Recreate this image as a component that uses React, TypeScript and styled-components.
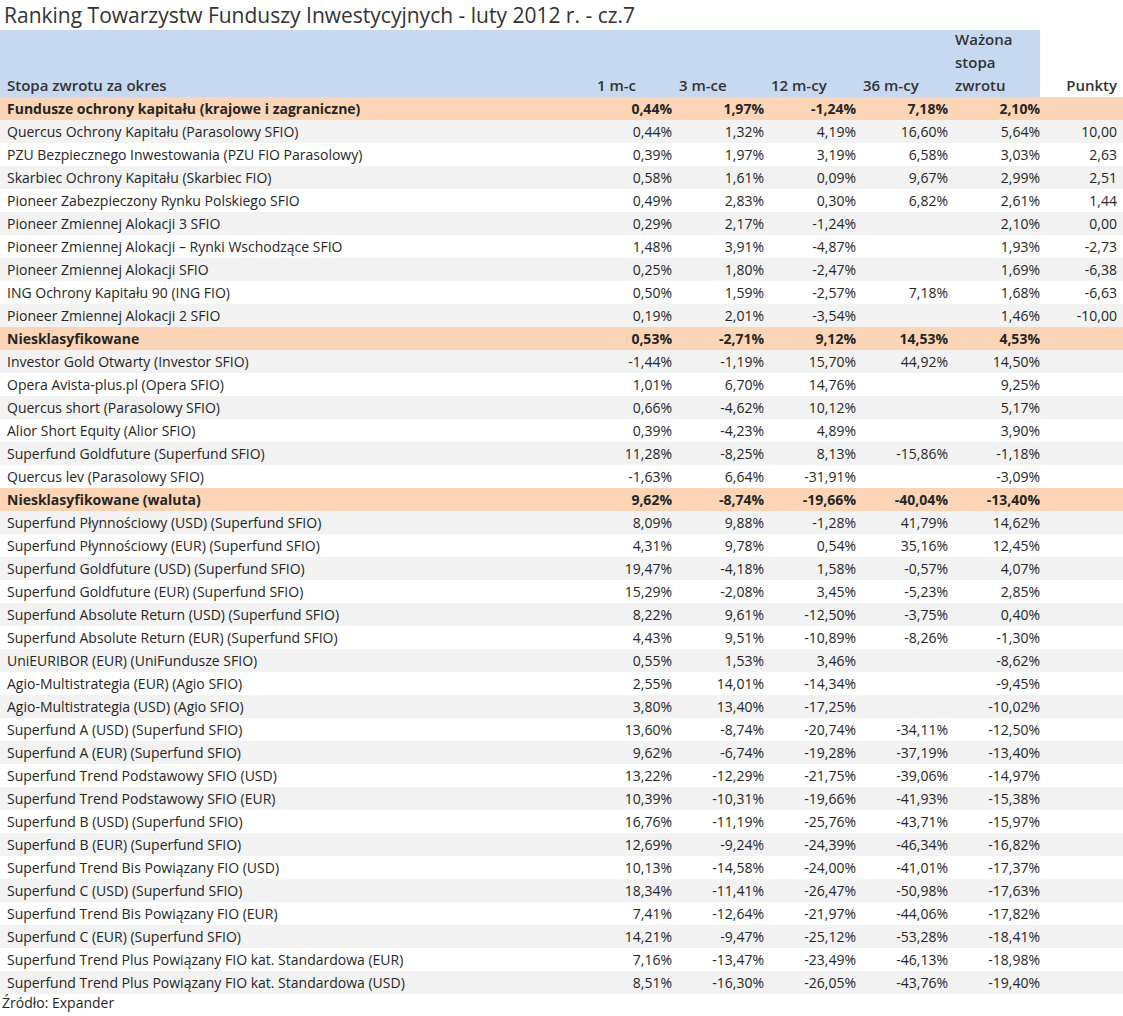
import styled, { createGlobalStyle } from "styled-components";

const Global = createGlobalStyle`
  body {
    margin: 0;
    background: #ffffff;
    font-family: "Open Sans", "Liberation Sans", sans-serif;
    color: #262626;
  }
`;

const Page = styled.div`
  width: 1123px;
  display: flex;
  flex-direction: column;
`;

const Title = styled.div`
  height: 30px;
  padding-left: 4px;
  font-size: 21px;
  line-height: 30px;
  color: #333;
`;

const Table = styled.div`
  display: grid;
  grid-template-columns: 590px 82px 92px 92px 92px 92px 77px 6px;
`;

const HeadCell = styled.div<{ $right?: boolean; $white?: boolean }>`
  height: 67px;
  background: ${({ $white }) => ($white ? "#ffffff" : "#c6d9f0")};
  font-size: 15px;
  font-weight: 600;
  line-height: 23px;
  color: #333;
  display: flex;
  align-items: flex-end;
  justify-content: ${({ $right }) => ($right ? "flex-end" : "flex-start")};
  padding: 0 ${({ $right }) => ($right ? "0" : "7px")} 0 7px;
`;

const Cell = styled.div<{ $bg: string; $bold?: boolean; $right?: boolean }>`
  height: 23px;
  background: ${({ $bg }) => $bg};
  font-size: 14px;
  font-weight: ${({ $bold }) => ($bold ? 700 : 400)};
  line-height: 23px;
  white-space: nowrap;
  text-align: ${({ $right }) => ($right ? "right" : "left")};
  padding-left: ${({ $right }) => ($right ? "0" : "7px")};
`;

const Source = styled.div`
  font-size: 14px;
  padding-left: 2px;
  line-height: 18px;
`;

const data: { g?: boolean; r: string[] }[] = [
  { g: true, r: ["Fundusze ochrony kapitału (krajowe i zagraniczne)", "0,44%", "1,97%", "-1,24%", "7,18%", "2,10%", ""] },
  { r: ["Quercus Ochrony Kapitału (Parasolowy SFIO)", "0,44%", "1,32%", "4,19%", "16,60%", "5,64%", "10,00"] },
  { r: ["PZU Bezpiecznego Inwestowania (PZU FIO Parasolowy)", "0,39%", "1,97%", "3,19%", "6,58%", "3,03%", "2,63"] },
  { r: ["Skarbiec Ochrony Kapitału (Skarbiec FIO)", "0,58%", "1,61%", "0,09%", "9,67%", "2,99%", "2,51"] },
  { r: ["Pioneer Zabezpieczony Rynku Polskiego SFIO", "0,49%", "2,83%", "0,30%", "6,82%", "2,61%", "1,44"] },
  { r: ["Pioneer Zmiennej Alokacji 3 SFIO", "0,29%", "2,17%", "-1,24%", "", "2,10%", "0,00"] },
  { r: ["Pioneer Zmiennej Alokacji – Rynki Wschodzące SFIO", "1,48%", "3,91%", "-4,87%", "", "1,93%", "-2,73"] },
  { r: ["Pioneer Zmiennej Alokacji SFIO", "0,25%", "1,80%", "-2,47%", "", "1,69%", "-6,38"] },
  { r: ["ING Ochrony Kapitału 90 (ING FIO)", "0,50%", "1,59%", "-2,57%", "7,18%", "1,68%", "-6,63"] },
  { r: ["Pioneer Zmiennej Alokacji 2 SFIO", "0,19%", "2,01%", "-3,54%", "", "1,46%", "-10,00"] },
  { g: true, r: ["Niesklasyfikowane", "0,53%", "-2,71%", "9,12%", "14,53%", "4,53%", ""] },
  { r: ["Investor Gold Otwarty (Investor SFIO)", "-1,44%", "-1,19%", "15,70%", "44,92%", "14,50%", ""] },
  { r: ["Opera Avista-plus.pl (Opera SFIO)", "1,01%", "6,70%", "14,76%", "", "9,25%", ""] },
  { r: ["Quercus short (Parasolowy SFIO)", "0,66%", "-4,62%", "10,12%", "", "5,17%", ""] },
  { r: ["Alior Short Equity (Alior SFIO)", "0,39%", "-4,23%", "4,89%", "", "3,90%", ""] },
  { r: ["Superfund Goldfuture (Superfund SFIO)", "11,28%", "-8,25%", "8,13%", "-15,86%", "-1,18%", ""] },
  { r: ["Quercus lev (Parasolowy SFIO)", "-1,63%", "6,64%", "-31,91%", "", "-3,09%", ""] },
  { g: true, r: ["Niesklasyfikowane (waluta)", "9,62%", "-8,74%", "-19,66%", "-40,04%", "-13,40%", ""] },
  { r: ["Superfund Płynnościowy (USD) (Superfund SFIO)", "8,09%", "9,88%", "-1,28%", "41,79%", "14,62%", ""] },
  { r: ["Superfund Płynnościowy (EUR) (Superfund SFIO)", "4,31%", "9,78%", "0,54%", "35,16%", "12,45%", ""] },
  { r: ["Superfund Goldfuture (USD) (Superfund SFIO)", "19,47%", "-4,18%", "1,58%", "-0,57%", "4,07%", ""] },
  { r: ["Superfund Goldfuture (EUR) (Superfund SFIO)", "15,29%", "-2,08%", "3,45%", "-5,23%", "2,85%", ""] },
  { r: ["Superfund Absolute Return (USD) (Superfund SFIO)", "8,22%", "9,61%", "-12,50%", "-3,75%", "0,40%", ""] },
  { r: ["Superfund Absolute Return (EUR) (Superfund SFIO)", "4,43%", "9,51%", "-10,89%", "-8,26%", "-1,30%", ""] },
  { r: ["UniEURIBOR (EUR) (UniFundusze SFIO)", "0,55%", "1,53%", "3,46%", "", "-8,62%", ""] },
  { r: ["Agio-Multistrategia (EUR) (Agio SFIO)", "2,55%", "14,01%", "-14,34%", "", "-9,45%", ""] },
  { r: ["Agio-Multistrategia (USD) (Agio SFIO)", "3,80%", "13,40%", "-17,25%", "", "-10,02%", ""] },
  { r: ["Superfund A (USD) (Superfund SFIO)", "13,60%", "-8,74%", "-20,74%", "-34,11%", "-12,50%", ""] },
  { r: ["Superfund A (EUR) (Superfund SFIO)", "9,62%", "-6,74%", "-19,28%", "-37,19%", "-13,40%", ""] },
  { r: ["Superfund Trend Podstawowy SFIO (USD)", "13,22%", "-12,29%", "-21,75%", "-39,06%", "-14,97%", ""] },
  { r: ["Superfund Trend Podstawowy SFIO (EUR)", "10,39%", "-10,31%", "-19,66%", "-41,93%", "-15,38%", ""] },
  { r: ["Superfund B (USD) (Superfund SFIO)", "16,76%", "-11,19%", "-25,76%", "-43,71%", "-15,97%", ""] },
  { r: ["Superfund B (EUR) (Superfund SFIO)", "12,69%", "-9,24%", "-24,39%", "-46,34%", "-16,82%", ""] },
  { r: ["Superfund Trend Bis Powiązany FIO (USD)", "10,13%", "-14,58%", "-24,00%", "-41,01%", "-17,37%", ""] },
  { r: ["Superfund C (USD) (Superfund SFIO)", "18,34%", "-11,41%", "-26,47%", "-50,98%", "-17,63%", ""] },
  { r: ["Superfund Trend Bis Powiązany FIO (EUR)", "7,41%", "-12,64%", "-21,97%", "-44,06%", "-17,82%", ""] },
  { r: ["Superfund C (EUR) (Superfund SFIO)", "14,21%", "-9,47%", "-25,12%", "-53,28%", "-18,41%", ""] },
  { r: ["Superfund Trend Plus Powiązany FIO kat. Standardowa (EUR)", "7,16%", "-13,47%", "-23,49%", "-46,13%", "-18,98%", ""] },
  { r: ["Superfund Trend Plus Powiązany FIO kat. Standardowa (USD)", "8,51%", "-16,30%", "-26,05%", "-43,76%", "-19,40%", ""] },
];

const heads = ["1 m-c", "3 m-ce", "12 m-cy", "36 m-cy", "Ważona\nstopa\nzwrotu"];

const App = () => {
  let stripe = 0;
  return (
    <Page>
      <Global />
      <Title>Ranking Towarzystw Funduszy Inwestycyjnych - luty 2012 r. - cz.7</Title>
      <Table>
        <HeadCell>Stopa zwrotu za okres</HeadCell>
        {heads.map((h) => (
          <HeadCell key={h}>
            <span style={{ whiteSpace: "pre-line" }}>{h}</span>
          </HeadCell>
        ))}
        <HeadCell $white $right>Punkty</HeadCell>
        <HeadCell $white />
        {data.map((row, i) => {
          let bg = "#fbd5b5";
          if (row.g) stripe = 0;
          else {
            bg = stripe % 2 === 0 ? "#f2f2f2" : "#ffffff";
            stripe++;
          }
          return [
            ...row.r.map((v, j) => (
              <Cell key={`${i}-${j}`} $bg={bg} $bold={row.g} $right={j > 0}>
                {v}
              </Cell>
            )),
            <Cell key={`${i}-e`} $bg={bg} />,
          ];
        })}
      </Table>
      <Source>Źródło: Expander</Source>
    </Page>
  );
};

export default App;
